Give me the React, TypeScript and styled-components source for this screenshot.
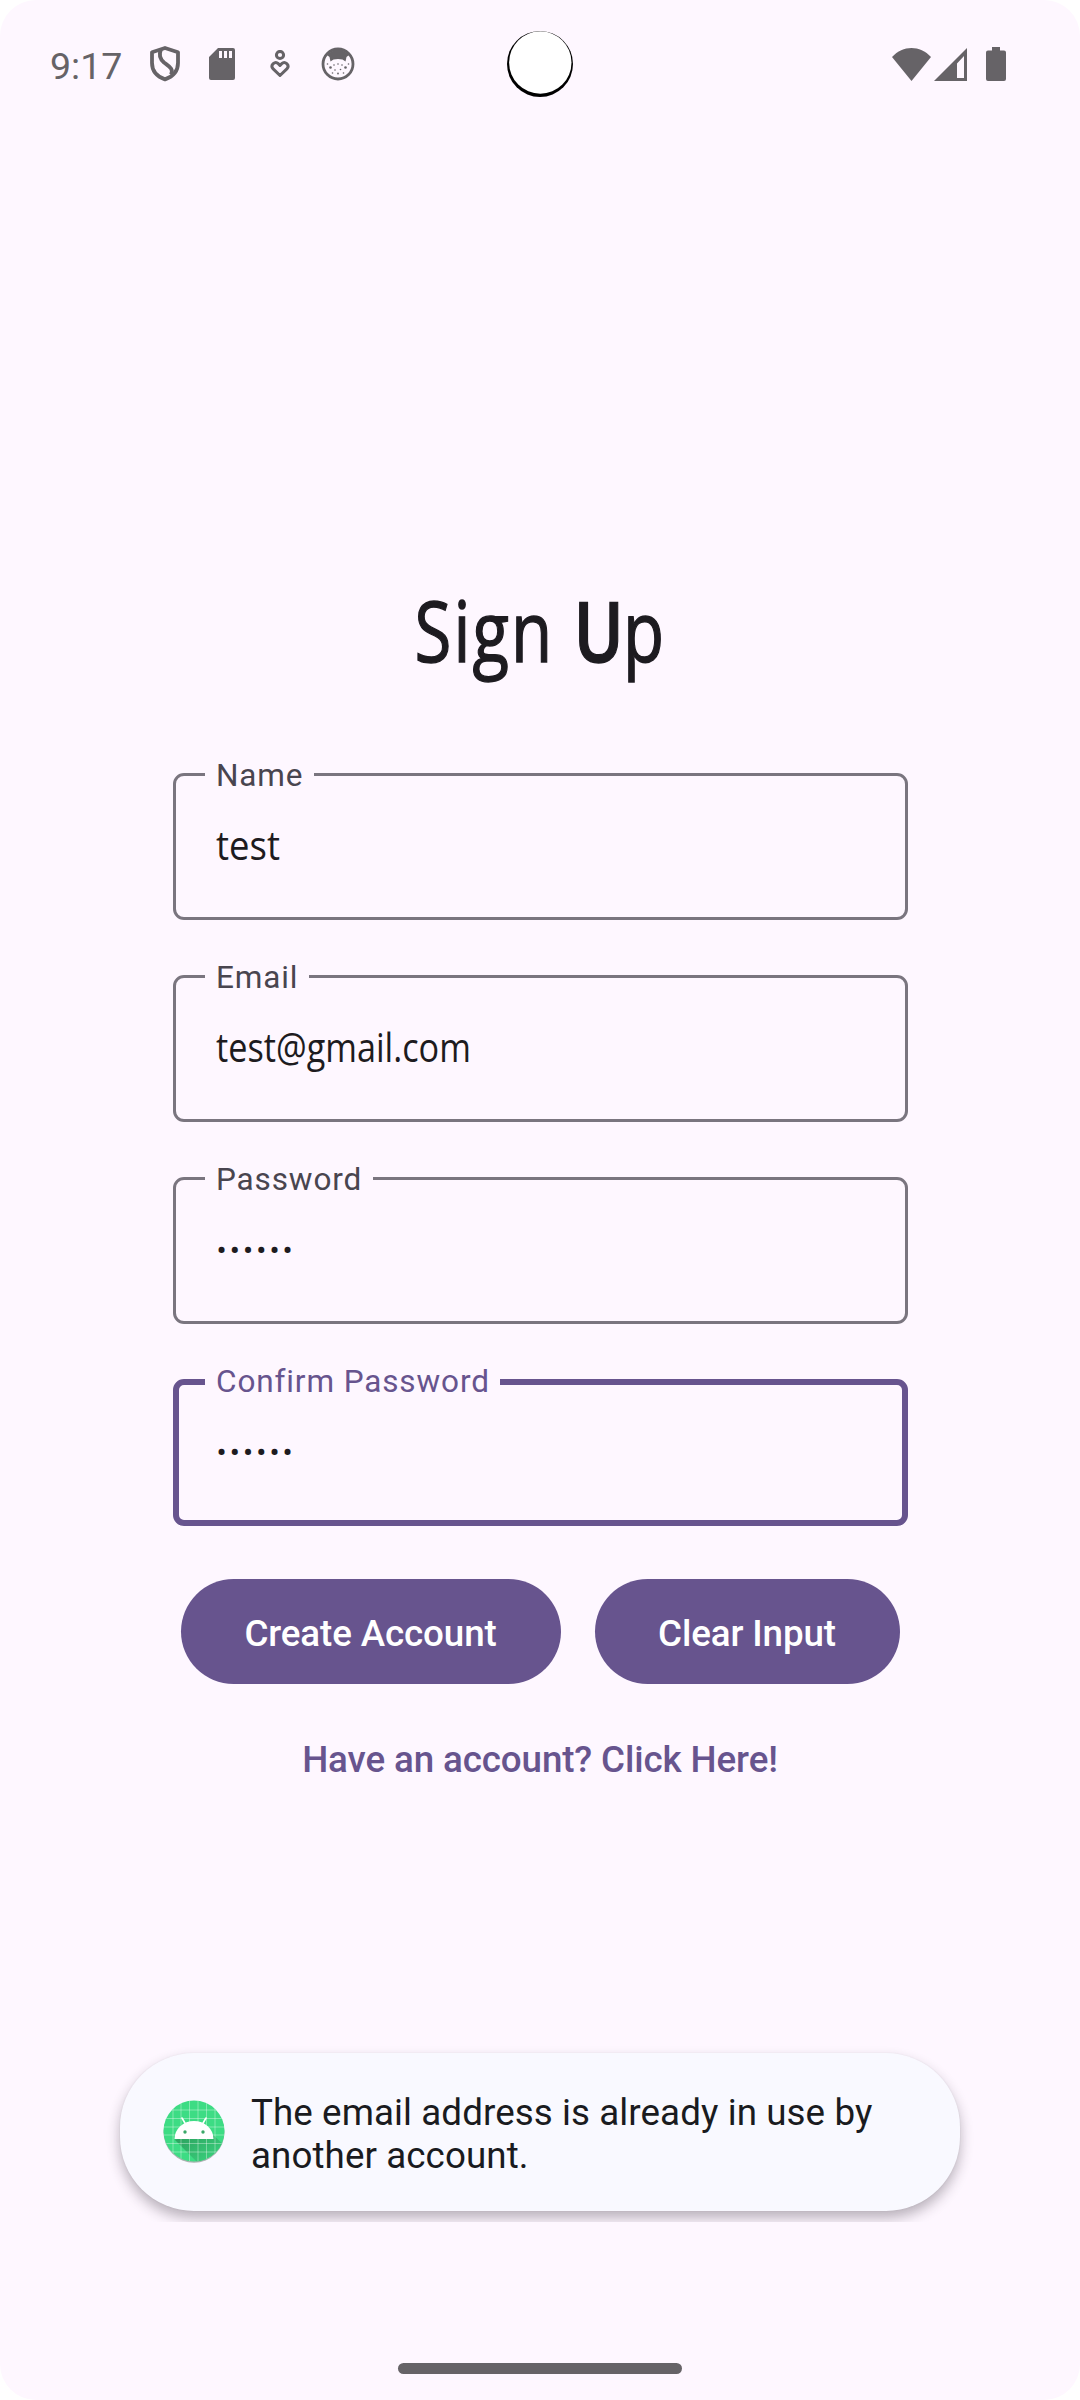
import React from "react";
import styled, { createGlobalStyle } from "styled-components";

const ink = "#1d1b20";
const purple = "#67548e";
const statusGrey = "#666367";

const GlobalStyle = createGlobalStyle`
  * { box-sizing: border-box; }
  body { margin: 0; background: #fff; font-family: Roboto, sans-serif; }
`;

const Screen = styled.div`
  position: relative;
  display: flex;
  flex-direction: column;
  align-items: center;
  width: 1080px;
  height: 2400px;
  overflow: hidden;
  border-radius: 36px;
  background: #fef7ff;
`;

const StatusBar = styled.header`
  display: flex;
  justify-content: space-between;
  align-items: center;
  width: 100%;
  height: 128px;
  padding: 0 74px 0 50px;
  color: ${statusGrey};
`;

const StatusGroup = styled.div`
  display: flex;
  align-items: center;
`;

const Clock = styled.span`
  width: 100px;
  padding-top: 4px;
  font-size: 37.5px;
  line-height: 44px;
`;

const Glyph = styled.svg<{ $w: number; $h: number; $gap?: number }>`
  display: block;
  flex: none;
  width: ${(p) => p.$w}px;
  height: ${(p) => p.$h}px;
  margin-right: ${(p) => p.$gap ?? 0}px;
`;

const Camera = styled.svg`
  position: absolute;
  left: 506px;
  top: 30px;
  width: 68px;
  height: 68px;
`;

const Title = styled.h1`
  height: 110px;
  margin: 447px 0 0;
  color: ${ink};
  font: 400 84px/110px "Open Sans", sans-serif;
  letter-spacing: 2.6px;
  white-space: nowrap;
  transform: scaleX(0.8);
  -webkit-text-stroke: 1.4px ${ink};
`;

const TitleStrong = styled.span`
  font-weight: 600;
  letter-spacing: -1px;
`;

const Form = styled.form`
  display: flex;
  flex-direction: column;
  gap: 55px;
  width: 735px;
  margin-top: 88px;
`;

const Field = styled.fieldset<{ $active?: boolean }>`
  height: 147px;
  min-width: 0;
  margin: 0;
  padding: 0 0 0 ${(p) => (p.$active ? 37 : 40)}px;
  border: ${(p) => (p.$active ? 6 : 3)}px solid ${(p) => (p.$active ? purple : "#7a757f")};
  border-radius: 11px;
`;

const Label = styled.legend<{ $active?: boolean }>`
  height: ${(p) => (p.$active ? 6 : 3)}px;
  margin-left: -11px;
  padding: 0 10.5px 0 11.5px;
  color: ${(p) => (p.$active ? purple : "#49454f")};
  font-size: 31.5px;
  letter-spacing: 0.88px;
  line-height: 5px;
  white-space: nowrap;
`;

const Value = styled.div<{ $squeeze: number }>`
  width: max-content;
  padding-top: 40px;
  color: ${ink};
  font: 400 41px/56px "Open Sans", sans-serif;
  transform: scaleX(${(p) => p.$squeeze});
  transform-origin: left;
`;

const Secret = styled.div<{ $active?: boolean }>`
  padding-top: ${(p) => (p.$active ? 39 : 42)}px;
  padding-left: 1px;
  color: ${ink};
  font-size: 30px;
  line-height: 57px;
  letter-spacing: 3.1px;
`;

const Actions = styled.div`
  display: flex;
  gap: 34px;
  margin-top: 53px;
`;

const Button = styled.button<{ $w: number }>`
  width: ${(p) => p.$w}px;
  height: 105px;
  padding: 4px 0 0;
  border: 0;
  border-radius: 53px;
  background: ${purple};
  color: #fff;
  font: 500 36.75px/52px Roboto, sans-serif;
  letter-spacing: -0.12px;
`;

const SignInLink = styled.a`
  margin-top: 50px;
  color: ${purple};
  font-size: 36.75px;
  font-weight: 500;
  line-height: 52px;
  letter-spacing: -0.12px;
`;

const ToastClip = styled.div`
  display: flex;
  justify-content: center;
  width: 100%;
  height: 200px;
  margin-top: 236px;
  padding-top: 31px;
  overflow: hidden;
`;

const Toast = styled.div`
  display: flex;
  align-items: center;
  width: 840px;
  height: 158px;
  padding: 0 43px;
  border-radius: 74px;
  background: #f9f9ff;
  box-shadow: 0 7px 13px rgba(40, 30, 45, 0.32), 0 0 2px rgba(40, 30, 45, 0.07);
`;

const ToastText = styled.p`
  margin: 0;
  padding-top: 3px;
  color: #1a1b20;
  font-size: 36.75px;
  line-height: 43px;
  letter-spacing: 0.08px;
  white-space: pre-line;
`;

const NavHandle = styled.div`
  width: 284px;
  height: 11px;
  margin-top: 141px;
  border-radius: 6px;
  background: ${statusGrey};
`;

const ShieldIcon = () => (
  <Glyph $w={30} $h={36} $gap={29} viewBox="0 0 30 36" fill="none" stroke="currentColor" strokeWidth="3.800" strokeLinejoin="round">
    <path d="M15 2 L28 6.200 V17 C28 25 22.500 30.700 15 33.400 C7.500 30.700 2 25 2 17 V6.200 Z" />
    <path d="M11 3.500 C8.500 9 10 13 14 16.500 C19 20.500 24 22.500 21 28.500" />
  </Glyph>
);

const CardIcon = () => (
  <Glyph $w={26} $h={32} $gap={35} viewBox="0 0 26 32">
    <path fill="currentColor" fillRule="evenodd" d="M9 0 H24 Q26 0 26 2 V30 Q26 32 24 32 H2 Q0 32 0 30 V9 Z M10 3 V10 H13 V3 Z M15 3 V10 H18 V3 Z M20 3 V10 H23 V3 Z" />
  </Glyph>
);

const CareIcon = () => (
  <Glyph $w={20} $h={28} $gap={31} viewBox="0 0 20 28" fill="none" stroke="currentColor" strokeWidth="3" strokeLinejoin="round">
    <circle cx="10" cy="5" r="3.600" />
    <path d="M10 25.500 L2.900 18.600 C0 15 5 10.500 8.300 13.700 L10 15.500 L11.700 13.700 C15 10.500 20 15 17.100 18.600 Z" />
  </Glyph>
);

const FaceIcon = () => (
  <Glyph $w={34} $h={34} viewBox="0 0 34 34" fill="none">
    <circle cx="17" cy="17" r="15" fill="#fef7ff" stroke="currentColor" strokeWidth="2.800" />
    <path fill="currentColor" d="M6 8 Q17 -3 28 8 L25.500 10 L24.500 14.500 L21.500 12.500 Q17 11.500 12.500 12.500 L9.500 14.500 L8.500 10 Z" />
    <g fill="currentColor">
      <circle cx="9.500" cy="20.500" r="1.300" />
      <circle cx="24.500" cy="20.500" r="1.300" />
      <circle cx="17" cy="17" r="0.800" />
      <circle cx="13" cy="18" r="0.800" />
      <circle cx="21" cy="18" r="0.800" />
      <circle cx="14" cy="23" r="0.800" />
      <circle cx="19.500" cy="22.500" r="0.800" />
      <circle cx="17" cy="26.500" r="0.900" />
      <circle cx="11.500" cy="26" r="0.800" />
      <circle cx="22.500" cy="26" r="0.800" />
      <circle cx="6.500" cy="17" r="0.800" />
      <circle cx="27.500" cy="17" r="0.800" />
    </g>
  </Glyph>
);

const WifiIcon = () => (
  <Glyph $w={39} $h={33} $gap={3} viewBox="0 0 39 33">
    <path fill="currentColor" d="M0 9 C11 -3 28 -3 39 9 L19.500 33 Z" />
  </Glyph>
);

const SignalIcon = () => (
  <Glyph $w={33} $h={33} $gap={19} viewBox="0 0 33 33">
    <path fill="currentColor" fillRule="evenodd" d="M33 0 V33 H0 Z M30 8 L23 15.500 V30 H30 Z" />
  </Glyph>
);

const BatteryIcon = () => (
  <Glyph $w={20} $h={34} viewBox="0 0 20 34">
    <path fill="currentColor" d="M6 0 H14 V3.500 H18 Q20 3.500 20 5.500 V32 Q20 34 18 34 H2 Q0 34 0 32 V5.500 Q0 3.500 2 3.500 H6 Z" />
  </Glyph>
);

const AndroidIcon = () => (
  <Glyph $w={62} $h={64} $gap={26} viewBox="0 0 62 64">
    <defs>
      <clipPath id="disc"><circle cx="31" cy="31" r="30.500" /></clipPath>
      <linearGradient id="cast" x1="0" y1="0" x2="1" y2="1">
        <stop offset="0" stopColor="#2a9c5b" />
        <stop offset="1" stopColor="#3ddc84" />
      </linearGradient>
    </defs>
    <circle cx="31" cy="32.300" r="30.500" fill="#a9b3b0" />
    <g clipPath="url(#disc)">
      <rect width="62" height="62" fill="#3ddc84" />
      <path fill="url(#cast)" d="M11.500 39.500 L36 64 H62 V46 L49 34 Z" />
      <path stroke="#fff" strokeOpacity="0.400" strokeWidth="0.900" d="M10 0V62M18 0V62M26.500 0V62M35 0V62M43.500 0V62M52 0V62M0 10H62M0 18.500H62M0 27H62M0 35H62M0 43.500H62M0 52H62" />
    </g>
    <path fill="#fff" d="M11.500 39 A19.500 18 0 0 1 50.500 39 Z" />
    <path stroke="#fff" strokeWidth="1.600" strokeLinecap="round" d="M19 18 L22.500 24 M43 18 L39.500 24" />
    <circle cx="22" cy="32" r="1.700" fill="#3aa868" />
    <circle cx="40" cy="32" r="1.700" fill="#3aa868" />
  </Glyph>
);

export default function App() {
  return (
    <>
      <GlobalStyle />
      <Screen>
        <StatusBar>
          <StatusGroup>
            <Clock>9:17</Clock>
            <ShieldIcon />
            <CardIcon />
            <CareIcon />
            <FaceIcon />
          </StatusGroup>
          <StatusGroup>
            <WifiIcon />
            <SignalIcon />
            <BatteryIcon />
          </StatusGroup>
        </StatusBar>
        <Camera viewBox="0 0 68 68">
          <circle cx="34" cy="34" r="33" fill="#000" />
          <circle cx="34.300" cy="32.500" r="31.200" fill="#fff" />
        </Camera>
        <Title>
          Sign <TitleStrong>U</TitleStrong>p
        </Title>
        <Form>
          <Field>
            <Label>Name</Label>
            <Value $squeeze={0.89}>test</Value>
          </Field>
          <Field>
            <Label>Email</Label>
            <Value $squeeze={0.835}>test@gmail.com</Value>
          </Field>
          <Field>
            <Label>Password</Label>
            <Secret>••••••</Secret>
          </Field>
          <Field $active>
            <Label $active>Confirm Password</Label>
            <Secret $active>••••••</Secret>
          </Field>
        </Form>
        <Actions>
          <Button $w={380}>Create Account</Button>
          <Button $w={305}>Clear Input</Button>
        </Actions>
        <SignInLink>Have an account? Click Here!</SignInLink>
        <ToastClip>
          <Toast>
            <AndroidIcon />
            <ToastText>{"The email address is already in use by\nanother account."}</ToastText>
          </Toast>
        </ToastClip>
        <NavHandle />
      </Screen>
    </>
  );
}
